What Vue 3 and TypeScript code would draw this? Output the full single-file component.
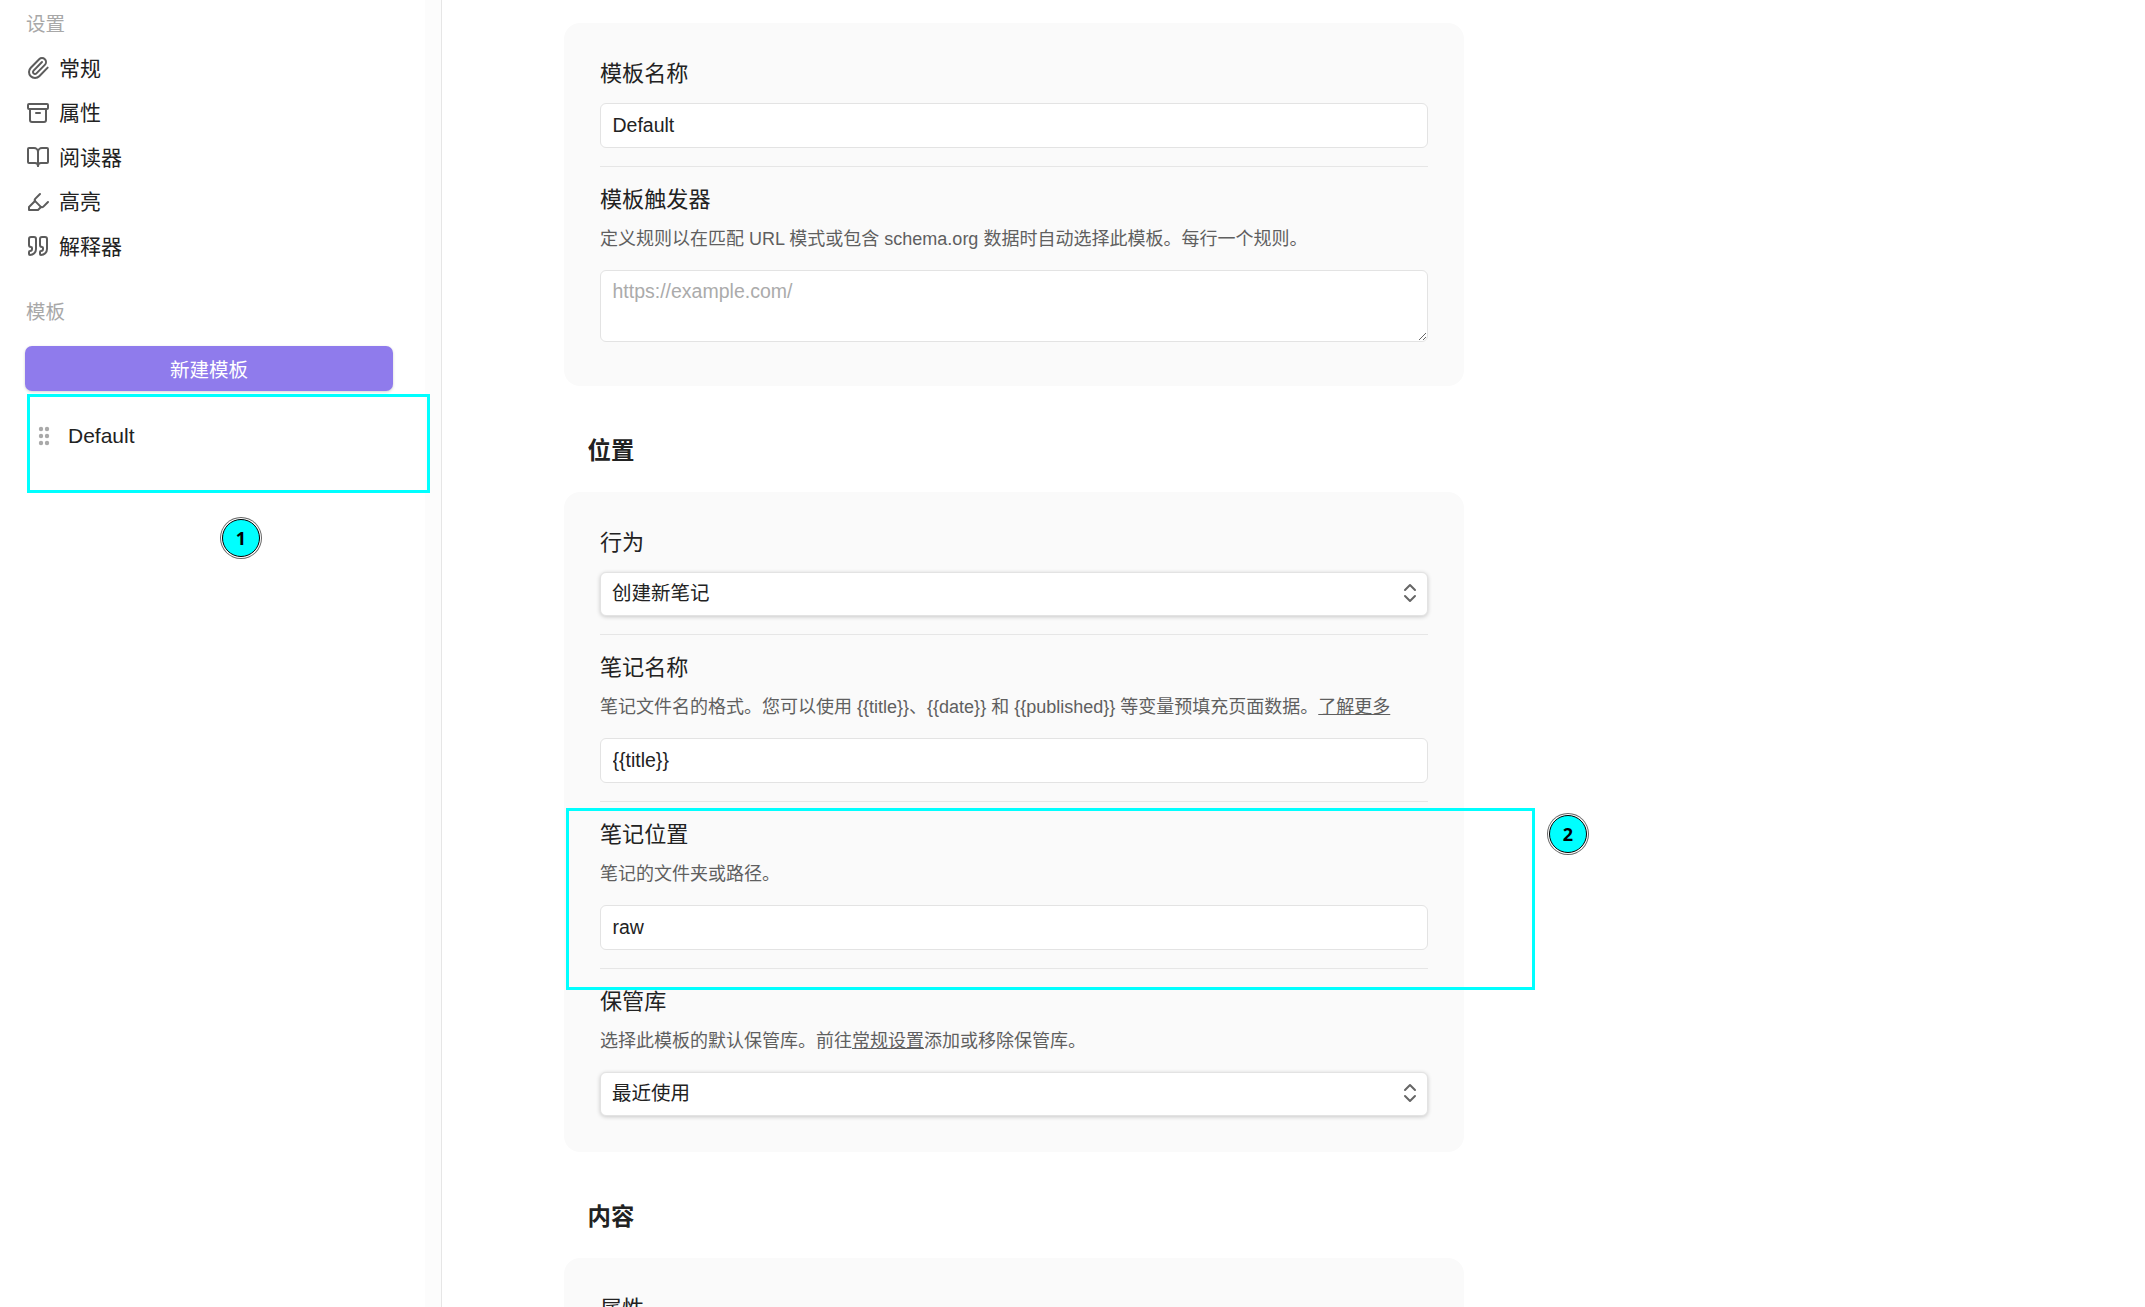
<script setup lang="ts">
interface NavItem { label: string; paths: string[] }
const navItems: NavItem[] = [
  { label: '常规', paths: ['m16 6-8.414 8.586a2 2 0 0 0 2.829 2.829l8.414-8.586a4 4 0 1 0-5.657-5.657l-8.379 8.551a6 6 0 1 0 8.485 8.485l8.379-8.551'] },
  { label: '属性', paths: ['M3 3h18a1 1 0 0 1 1 1v3a1 1 0 0 1-1 1H3a1 1 0 0 1-1-1V4a1 1 0 0 1 1-1z', 'M4 8v11a2 2 0 0 0 2 2h12a2 2 0 0 0 2-2V8', 'M10 12h4'] },
  { label: '阅读器', paths: ['M12 7v14', 'M3 18a1 1 0 0 1-1-1V4a1 1 0 0 1 1-1h5a4 4 0 0 1 4 4 4 4 0 0 1 4-4h5a1 1 0 0 1 1 1v13a1 1 0 0 1-1 1h-6a3 3 0 0 0-3 3 3 3 0 0 0-3-3z'] },
  { label: '高亮', paths: ['m9 11-6 6v3h9l3-3', 'm22 12-4.6 4.6a2 2 0 0 1-2.8 0l-5.2-5.2a2 2 0 0 1 0-2.8L14 4'] },
  { label: '解释器', paths: ['M16 3a2 2 0 0 0-2 2v6a2 2 0 0 0 2 2 1 1 0 0 1 1 1v1a2 2 0 0 1-2 2 1 1 0 0 0-1 1v2a1 1 0 0 0 1 1 6 6 0 0 0 6-6V5a2 2 0 0 0-2-2z', 'M5 3a2 2 0 0 0-2 2v6a2 2 0 0 0 2 2 1 1 0 0 1 1 1v1a2 2 0 0 1-2 2 1 1 0 0 0-1 1v2a1 1 0 0 0 1 1 6 6 0 0 0 6-6V5a2 2 0 0 0-2-2z'] },
]
const dots: number[][] = [[3, 3], [9, 3], [3, 10], [9, 10], [3, 17], [9, 17]]
const noteNameDesc = '笔记文件名的格式。您可以使用 {' + '{title}}、{' + '{date}} 和 {' + '{published}} 等变量预填充页面数据。'
const noteNameValue = '{' + '{title}}'
</script>

<template>
  <div class="page">
    <aside class="sidebar">
      <div class="side-title">设置</div>
      <nav class="nav">
        <div v-for="item in navItems" :key="item.label" class="nav-item">
          <svg class="nav-icon" viewBox="0 0 24 24" fill="none" stroke="currentColor" stroke-width="2" stroke-linecap="round" stroke-linejoin="round">
            <path v-for="d in item.paths" :key="d" :d="d" />
          </svg>
          <span class="nav-text">{{ item.label }}</span>
        </div>
      </nav>
      <div class="side-title templates-title">模板</div>
      <button class="new-btn" type="button">新建模板</button>
      <div class="template-item">
        <svg class="drag" viewBox="0 0 12 20" fill="#a9a9a9">
          <circle v-for="p in dots" :key="p.join()" :cx="p[0]" :cy="p[1]" r="2.2" />
        </svg>
        <span>Default</span>
      </div>
    </aside>

    <main class="main">
      <section class="card card-first">
        <div class="row">
          <div class="label plain">模板名称</div>
          <input class="field" type="text" value="Default" />
        </div>
        <div class="row last">
          <div class="label">模板触发器</div>
          <div class="desc">定义规则以在匹配 URL 模式或包含 schema.org 数据时自动选择此模板。每行一个规则。</div>
          <textarea class="field area" placeholder="https://example.com/"></textarea>
        </div>
      </section>

      <h2 class="section-title">位置</h2>
      <section class="card">
        <div class="row">
          <div class="label plain">行为</div>
          <div class="select-wrap">
            <select class="select"><option>创建新笔记</option></select>
            <svg class="chev" viewBox="0 0 14 20" fill="none" stroke="currentColor" stroke-width="2" stroke-linecap="round" stroke-linejoin="round"><path d="M2 7l5-5 5 5" /><path d="M2 13l5 5 5-5" /></svg>
          </div>
        </div>
        <div class="row">
          <div class="label">笔记名称</div>
          <div class="desc">{{ noteNameDesc }}<a class="link">了解更多</a></div>
          <input class="field" type="text" :value="noteNameValue" />
        </div>
        <div class="row">
          <div class="label">笔记位置</div>
          <div class="desc">笔记的文件夹或路径。</div>
          <input class="field" type="text" value="raw" />
        </div>
        <div class="row last">
          <div class="label">保管库</div>
          <div class="desc">选择此模板的默认保管库。前往<a class="link">常规设置</a>添加或移除保管库。</div>
          <div class="select-wrap">
            <select class="select"><option>最近使用</option></select>
            <svg class="chev" viewBox="0 0 14 20" fill="none" stroke="currentColor" stroke-width="2" stroke-linecap="round" stroke-linejoin="round"><path d="M2 7l5-5 5 5" /><path d="M2 13l5 5 5-5" /></svg>
          </div>
        </div>
      </section>

      <h2 class="section-title">内容</h2>
      <section class="card">
        <div class="row last">
          <div class="label plain">属性</div>
        </div>
      </section>
    </main>

    <div class="mark mark-one"></div>
    <div class="badge badge-one">1</div>
    <div class="mark mark-two"></div>
    <div class="badge badge-two">2</div>
  </div>
</template>

<style>
html, body { margin: 0; overflow: hidden; background: #fff; }
</style>

<style scoped>
.page {
  position: relative;
  display: flex;
  width: 2145px;
  height: 1307px;
  overflow: hidden;
  background: #fff;
  color: #222;
  font-family: "Liberation Sans", "Noto Sans CJK SC", sans-serif;
}
.sidebar {
  box-sizing: border-box;
  flex: none;
  width: 442px;
  padding: 9px 0 0 25px;
  border-right: 1px solid #e6e6e6;
  background: linear-gradient(to right, #fff 425px, #fcfcfc 425px);
}
.side-title {
  margin-left: 1px;
  height: 30px;
  line-height: 30px;
  font-size: 19.5px;
  color: #a8a8a8;
}
.nav { margin-top: 6.5px; }
.nav-item {
  display: flex;
  align-items: center;
  height: 44.5px;
  margin-left: 1px;
  font-size: 21px;
  color: #222;
}
.nav-text { margin-top: -2px; }
.nav-icon {
  width: 24px;
  height: 24px;
  margin-top: 1px;
  margin-right: 9px;
  flex: none;
  color: #5c5c5c;
}
.templates-title { margin-top: 29px; }
.new-btn {
  display: block;
  box-sizing: border-box;
  width: 368px;
  height: 45px;
  margin-top: 19px;
  padding: 0;
  border: 0;
  border-radius: 7px;
  background: #8f7bec;
  box-shadow: 0 1px 3px rgba(0, 0, 0, 0.18);
  color: #fff;
  font: inherit;
  font-size: 19.5px;
}
.template-item {
  display: flex;
  align-items: center;
  height: 45px;
  margin-top: 22px;
  margin-left: 13px;
  font-size: 21px;
  color: #222;
}
.drag {
  flex: none;
  width: 12px;
  height: 20px;
  margin-right: 18px;
}
.main {
  flex: none;
  width: 900px;
  margin-left: 122px;
  padding-top: 23px;
}
.card {
  box-sizing: border-box;
  width: 900px;
  padding: 18px 36px 18px;
  border-radius: 16px;
  background: #fafafa;
}
.card-first { padding-bottom: 26px; }
.row {
  padding: 18px 0;
  border-bottom: 1px solid #e6e6e6;
}
.row.last { border-bottom: 0; padding-bottom: 18px; }
.label {
  height: 30px;
  margin-bottom: 10px;
  line-height: 30px;
  font-size: 22.1px;
  color: #222;
}
.label.plain { margin-bottom: 14px; }
.desc {
  height: 26px;
  margin-bottom: 19px;
  line-height: 28px;
  font-size: 18px;
  color: #5f5f5f;
  white-space: nowrap;
}
.link { color: #5f5f5f; text-decoration: underline; }
.field {
  display: block;
  box-sizing: border-box;
  width: 828px;
  height: 45px;
  padding: 0 11.5px;
  border: 1px solid #e3e3e3;
  border-radius: 6px;
  outline: 0;
  background: #fff;
  color: #222;
  font: inherit;
  font-size: 19.5px;
}
.area {
  height: 72px;
  padding: 7px 11.5px;
  line-height: 26px;
}
.area::placeholder { color: #ababab; opacity: 1; }
.select-wrap {
  position: relative;
  width: 828px;
  height: 44px;
}
.select {
  display: block;
  box-sizing: border-box;
  width: 100%;
  height: 44px;
  padding: 0 11px 2px;
  border: 1px solid #e3e3e3;
  border-radius: 6px;
  outline: 0;
  appearance: none;
  background: #fff;
  box-shadow: 0 1px 4px rgba(0, 0, 0, 0.2);
  color: #222;
  font: inherit;
  font-size: 19.5px;
}
.chev {
  position: absolute;
  right: 11px;
  top: 11px;
  width: 14px;
  height: 20px;
  color: #666;
  pointer-events: none;
}
.section-title {
  height: 32px;
  margin: 48px 0 26px 23.5px;
  line-height: 34px;
  font-size: 23.4px;
  font-weight: 700;
  color: #222;
}
.mark {
  position: absolute;
  box-sizing: border-box;
  border: 3px solid #00ffff;
  pointer-events: none;
}
.mark-one { left: 27px; top: 394px; width: 403px; height: 98.5px; }
.mark-two { left: 566px; top: 808px; width: 969px; height: 182px; }
.badge {
  position: absolute;
  box-sizing: border-box;
  width: 38px;
  height: 38px;
  border-radius: 50%;
  border: 1px solid #000;
  background: #00ffff;
  box-shadow: 0 0 0 1px #fff, 0 0 0 2px #666;
  line-height: 36px;
  text-align: center;
  font-family: "Noto Sans", sans-serif;
  font-size: 18px;
  font-weight: 700;
  color: #000;
}
.badge-one { left: 222px; top: 519px; }
.badge-two { left: 1549px; top: 815px; }
</style>
